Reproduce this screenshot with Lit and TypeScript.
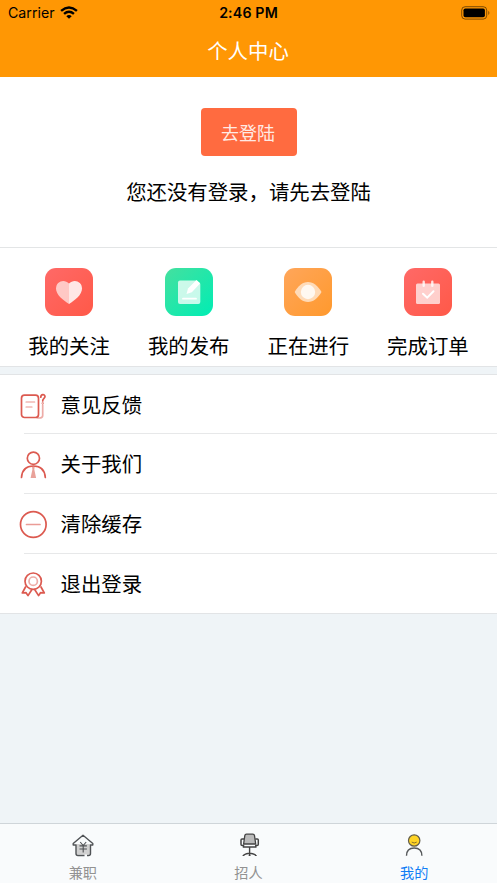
import { LitElement, html, svg, css } from "lit";
import { customElement } from "lit/decorators.js";

const heart = svg`
  <path d="M24 36 C18 32 11 27 11 20.500 C11 13 19.500 10.500 24 15.500 Z" fill="#fff" fill-opacity=".65"/>
  <path d="M24 36 C30 32 37 27 37 20.500 C37 13 28.500 10.500 24 15.500 Z" fill="#fff" fill-opacity=".85"/>`;
const note = svg`
  <path d="M15 12.500h16.500l3.800 4V34a2 2 0 0 1-2 2H15a2 2 0 0 1-2-2V14.500a2 2 0 0 1 2-2z" fill="#fff" fill-opacity=".76"/>
  <path d="M21.500 26l1.500-5.500L31.500 12l3.800 3.200-8.500 9z" fill="#fff"/>
  <path d="M18 30.700h13" stroke="#fff" stroke-width="1.800" stroke-linecap="round"/>`;
const eye = svg`
  <path d="M10.700 24 C14 18 18.500 14 24 14 S34 18 37.500 24 C34 30 29.500 34 24 34 S14 30 10.700 24Z" fill="#fff" fill-opacity=".62"/>
  <circle cx="24" cy="24" r="7.200" fill="#fff" fill-opacity=".8"/>`;
const calendar = svg`
  <rect x="12" y="15.500" width="24" height="20.500" rx="1.500" fill="#fff" fill-opacity=".7"/>
  <path d="M19.700 13.700v4M28.300 13.700v4" stroke="#fff" stroke-opacity=".8" stroke-width="2.400" stroke-linecap="round"/>
  <path d="M19 25.700l4.200 4 6.300-6.400" fill="none" stroke="#fff" stroke-width="2" stroke-linecap="round"/>`;

const feedback = svg`
  <path d="M24.700 15v10.500q0 2.500-3.500 2.500h-2" stroke-opacity=".5"/>
  <rect x="3.500" y="5.200" width="17" height="22.300" rx="3"/>
  <path d="M8 12h8.700M8 17h6" stroke-opacity=".65" stroke-width="1.200"/>
  <path d="M22.800 7.200C22.800 3.800 27 4 27 6.600C27 8.600 24.700 8.400 24.700 11"/><circle cx="24.700" cy="13.300" r=".3"/>`;
const person = svg`
  <path d="M14 17.500l.4 3-1.800 8.500h5.500l-1.800-8.500.4-3z" fill="#e9a29a" stroke="none"/>
  <circle cx="15.400" cy="9.200" r="6.100"/>
  <path d="M3.500 28.500C4 21 8.500 17 15.400 17S26.800 21 27.300 28.500"/>`;
const minus = svg`<circle cx="15.300" cy="15.500" r="12.800"/><path d="M8.500 15.500h13.500" stroke-opacity=".6"/>`;
const medal = svg`
  <circle cx="15.200" cy="12.200" r="8.200"/><circle cx="15.200" cy="12.200" r="4.200" stroke-opacity=".5"/>
  <path d="M7.500 18L4.300 24l3.800-.3 1.900 2.900 3.800-5.900M23 18l3.300 6-3.800-.3-1.900 2.900-3.800-5.900" stroke-linejoin="round"/>`;

const house = svg`
  <path d="M6 12.500h14.500V23H6z" fill="#d0d0d0"/>
  <path d="M14.500 24H8q-2 0-2-2v-8.500H3.200V12L13 3.800 22.800 12v1.500h-2.300V22q0 2-2 2H17" fill="none" stroke="#505356" stroke-width="1.400" stroke-linejoin="round"/>
  <path d="M10.200 10.500l3 3.500 3-3.500M9.500 14.400h7.400M9.500 17.500h7.400M13.200 14v7" fill="none" stroke="#505356" stroke-width="1.100"/>`;
const chair = svg`
  <path d="M10.500 2.700h6.300q1.500 0 1.700 1.500l1.200 8.300H7.600l1.200-8.300q.2-1.500 1.700-1.500z" fill="#bbb" stroke="#444" stroke-width="1.300"/>
  <path d="M8 7.500H6q-1 0-1 1v4.200q0 1.300 1.300 1.300h1.200v1.500h12.300V14H21q1.300 0 1.300-1.300V8.500q0-1-1-1h-2" fill="none" stroke="#444" stroke-width="1.500"/>
  <path d="M13.600 15.500v8.200M7.500 23.500q6-3.500 12.300 0M13.600 19v4" fill="none" stroke="#444" stroke-width="1.400"/>
  <path d="M7.500 23.500v1M19.800 23.500v1M13.600 23.500v1" stroke="#444" stroke-width="1.800"/>`;
const me = svg`
  <circle cx="14.200" cy="9.500" r="5.700" fill="#ffd426" stroke="#625d4b" stroke-width="1.200"/>
  <path d="M11.700 11.100q2.500 1.800 5 0" fill="none" stroke="#806a24" stroke-width=".9"/>
  <path d="M6.500 24.800c0-5 3-7.800 7.700-7.800s7.700 2.800 7.700 7.800" fill="none" stroke="#55585a" stroke-width="1.400"/>`;

const shortcuts = [
  { label: "我的关注", tone: "red", icon: heart },
  { label: "我的发布", tone: "green", icon: note },
  { label: "正在进行", tone: "orange", icon: eye },
  { label: "完成订单", tone: "red", icon: calendar },
];
const rows = [
  { label: "意见反馈", icon: feedback },
  { label: "关于我们", icon: person },
  { label: "清除缓存", icon: minus },
  { label: "退出登录", icon: medal },
];
const tabs = [
  { label: "兼职", icon: house, box: "-1 -0.5 28 28", active: false },
  { label: "招人", icon: chair, box: "-2 -0.5 28 28", active: false },
  { label: "我的", icon: me, box: "0 0 28 28", active: true },
];

@customElement("app-root")
export class AppRoot extends LitElement {
  static styles = css`
    :host {
      display: flex;
      flex-direction: column;
      height: 100vh;
      background: #eff4f7;
      color: #000;
      font-family: Inter, "Noto Sans CJK SC", sans-serif;
      font-size: 20.4px;
    }
    * { box-sizing: border-box; }
    svg { display: block; flex: none; }
    header { height: 77px; background: #ff9704; flex: none; }
    .status {
      height: 26px;
      display: grid;
      grid-template-columns: 1fr auto 1fr;
      align-items: center;
      padding: 0 7px 0 8px;
      font-size: 14.2px;
      line-height: 26px;
    }
    .carrier { display: flex; align-items: center; gap: 5px; }
    .time { font-weight: 600; letter-spacing: 0.15px; padding-right: 1px; }
    .battery { justify-self: end; }
    .title { text-align: center; color: #fff; line-height: 52px; height: 51px; padding-right: 1px; }
    .login {
      height: 171px;
      background: #fff;
      border-bottom: 1px solid #e3e5e6;
      padding-top: 31px;
      display: flex;
      flex-direction: column;
      align-items: center;
      flex: none;
    }
    .button {
      width: 96px;
      height: 48px;
      border: 0;
      border-radius: 4px;
      background: #ff6b40;
      color: #ffeae4;
      font: inherit;
      font-size: 18px;
      line-height: 48px;
      padding: 2px 1px 0 0;
    }
    .message { line-height: 30px; margin-top: 22px; }
    .shortcuts {
      height: 119px;
      background: #fff;
      border-bottom: 1px solid #e2e4e6;
      display: grid;
      grid-template-columns: repeat(4, 119.6px);
      justify-content: center;
      padding-top: 20px;
      flex: none;
    }
    .shortcut { display: flex; flex-direction: column; align-items: center; gap: 16px; line-height: 30px; }
    .tile { width: 48px; height: 48px; border-radius: 11px; }
    .red { background: linear-gradient(135deg, #ff6967, #ff5948); }
    .green { background: linear-gradient(135deg, #45e09f, #00edb4); }
    .orange { background: linear-gradient(135deg, #ffa65a, #ff992d); }
    .list {
      margin-top: 7px;
      height: 240px;
      background: #fff;
      border-top: 1px solid #e2e4e6;
      border-bottom: 1px solid #e2e4e6;
      display: grid;
      grid-template-rows: 59px 60px 60px 59px;
      flex: none;
    }
    .row { display: flex; align-items: center; padding: 2px 0 0 18px; }
    .row svg { fill: none; stroke: #dc5a50; stroke-width: 1.7; stroke-linecap: round; }
    .row .label { flex: 1; margin-left: 12.5px; line-height: 30px; }
    .row:not(:last-child) {
      background: linear-gradient(#e7e8e9, #e7e8e9) 24px 100% / 100% 1px no-repeat;
    }
    .row:last-child { padding-top: 3px; }
    .tabs {
      margin-top: auto;
      height: 60px;
      border-top: 1px solid #cfd5d9;
      background: #f9fbfc;
      display: grid;
      grid-template-columns: repeat(3, 1fr);
      flex: none;
    }
    .tab {
      display: flex;
      flex-direction: column;
      align-items: center;
      padding-top: 7px;
      color: #929292;
      font-size: 14.2px;
      line-height: 20px;
      gap: 4px;
    }
    .active { color: #107df5; }
  `;

  render() {
    return html`
      <header>
        <div class="status">
          <span class="carrier">Carrier
            <svg width="18" height="16" viewBox="0 0 20 16" fill="none" stroke="#000" stroke-width="2.700">
              <path d="M1.200 5.600Q10 -1.600 18.800 5.600"/>
              <path d="M4.500 9Q10 4.400 15.500 9"/>
              <path d="M7 11.500Q10 9 13 11.500L10 14.400Z" fill="#000" stroke="none"/>
            </svg>
          </span>
          <span class="time">2:46 PM</span>
          <svg class="battery" width="29" height="14" viewBox="0 0 29 14">
            <rect x=".7" y=".7" width="25" height="12.400" rx="3.500" fill="none" stroke="#000" stroke-opacity=".5"/>
            <rect x="2.500" y="2.500" width="21.400" height="8.800" rx="1.800"/>
            <path d="M27.300 4.800q2.200 2.100 0 4.200z" fill-opacity=".5"/>
          </svg>
        </div>
        <div class="title">个人中心</div>
      </header>
      <section class="login">
        <button class="button">去登陆</button>
        <div class="message">您还没有登录，请先去登陆</div>
      </section>
      <section class="shortcuts">
        ${shortcuts.map((s) => html`
          <div class="shortcut">
            <svg class="tile ${s.tone}" viewBox="0 0 48 48">${s.icon}</svg>
            <span>${s.label}</span>
          </div>`)}
      </section>
      <section class="list">
        ${rows.map((r) => html`
          <div class="row">
            <svg width="30" height="32" viewBox="0 0 30 32">${r.icon}</svg>
            <span class="label">${r.label}</span>
          </div>`)}
      </section>
      <nav class="tabs">
        ${tabs.map((t) => html`
          <div class="tab ${t.active ? "active" : ""}">
            <svg width="28" height="28" viewBox=${t.box}>${t.icon}</svg>
            <span>${t.label}</span>
          </div>`)}
      </nav>
    `;
  }
}
